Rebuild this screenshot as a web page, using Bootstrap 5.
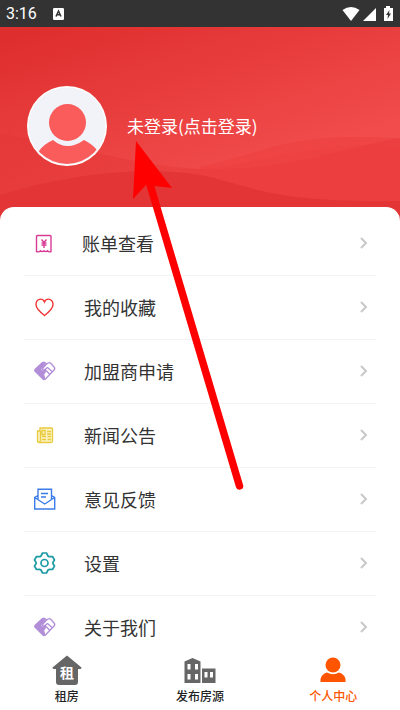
<!DOCTYPE html>
<html lang="zh-CN">
<head>
<meta charset="utf-8">
<meta name="viewport" content="width=device-width, initial-scale=1">
<title>个人中心</title>
<link href="https://cdn.jsdelivr.net/npm/bootstrap@5.3.0/dist/css/bootstrap.min.css" rel="stylesheet">
<style>
body{font-family:Roboto,"Noto Sans CJK SC",sans-serif;background:#fff;color:#333}
svg{display:block;flex:none}
.status-bar{height:27px;padding:0 6px;background:#333;color:#fff;font-size:16px;line-height:27px}
.hero{height:194px;background:#e53935;overflow:hidden}
.hero-waves{z-index:0}
.profile{height:198px;padding:0 27px;gap:20px;z-index:1}
.login-link{font-family:"Noto Sans CJK SC",sans-serif;font-size:17px;line-height:24px}
.menu-panel{margin-top:-14px;padding:5px 24px 50px;border-radius:14px 14px 0 0;z-index:1}
.menu-row{height:64px;border-bottom:1px solid #f3f3f4;padding:0 7px 2px 8px;gap:27px;color:#333;font-family:"Noto Sans CJK SC",sans-serif;font-size:18px;line-height:26px}
.menu-row:last-child{border-bottom:0}
.menu-row:first-child{gap:25px}
.tab-bar{height:62px}
.tab-link{font-family:"Noto Sans CJK SC",sans-serif;font-size:12px;line-height:16px;font-weight:500;color:#222;padding-top:7px;gap:2px}
.tab-link.active{color:#ff5500}
.pointer{left:0;top:0;z-index:1040;pointer-events:none}
</style>
<script src="https://cdn.jsdelivr.net/npm/bootstrap@5.3.0/dist/js/bootstrap.bundle.min.js"></script>
</head>
<body class="overflow-hidden">
<svg width="0" height="0" class="position-absolute" aria-hidden="true">
<symbol id="chev" viewBox="0 0 10 14"><path d="M2 2l5 5-5 5" fill="none" stroke="#c8c8c8" stroke-width="2"/></symbol>
<symbol id="hands" viewBox="0 0 24 24"><path d="M2 10L9 3.500Q10.500 2.500 12 4L13.500 5.500 8.500 10.500Q10 12.500 13 10.500L14 11.500 11 16 13 20.500Q11.500 22 10 20.500L2 12.500Q1 11.500 2 10Z" fill="#b28ed8"/><path d="M9.500 4.500Q10.500 2.500 12.500 3.500L14 5 9.500 10Q11 12 13 10L15 8.500M13.500 5.500L15.500 4Q17 3 18.500 4.500L21.500 8Q23 9.500 21.500 11L12.500 20.500M15 8.500L20 13M13 11L17.500 15.500M11 15.500L13 12.500M11 15.500L12 19" fill="none" stroke="#b28ed8" stroke-width="1.300"/></symbol>
</svg>
<header class="status-bar d-flex align-items-center justify-content-between">
<div class="d-flex align-items-center gap-3"><span>3:16</span>
<svg width="11" height="12" viewBox="0 0 11 12"><rect width="11" height="12" rx="1.300" fill="#fff"/><path d="M3 8.500L5.500 3 8 8.500M4 6.800h3" fill="none" stroke="#333" stroke-width="1.500"/></svg></div>
<svg width="52" height="16" viewBox="0 0 52 16" fill="#fff"><path d="M.5 4Q9-2 17.500 4L9 15Z"/><path d="M34 2v13H21Z"/><path d="M44 2V0h4v2h3v13h-9V2Z"/><path d="M47.500 4l-3.500 5h2l-.5 4 3.500-5.500h-2Z" fill="#333"/></svg>
</header>
<section class="hero position-relative">
<svg class="hero-waves position-absolute top-0 start-0 w-100 h-100" viewBox="0 0 400 194" preserveAspectRatio="none" aria-hidden="true">
<defs>
<linearGradient id="bg" gradientUnits="userSpaceOnUse" x1="40" y1="0" x2="120" y2="240"><stop offset="0" stop-color="#df2e2e"/><stop offset="1" stop-color="#f65353"/></linearGradient>
<linearGradient id="left" x1="0" x2="1"><stop offset="0" stop-color="#e33636"/><stop offset="1" stop-color="#ed4242"/></linearGradient></defs>
<rect width="400" height="194" fill="url(#bg)"/>
<path d="M0 107C60 114 126 138 200 142C264 137 310 112 400 120V194H0Z" fill="url(#left)" opacity=".6"/>
<path d="M200 140C285 120 285 106 400 111V194H200Z" fill="#ee4242" opacity=".7"/>
<path d="M180 142C295 145 320 125 400 111V194H180Z" fill="#eb3d3d" opacity=".8"/>
<path d="M0 168C65 148 140 138 200 148C252 158 265 176 400 174V194H0Z" fill="#e33535"/>
</svg>
<div class="profile position-relative d-flex align-items-center">
<svg width="80" height="80" viewBox="0 0 80 80" role="img" aria-label="头像"><defs><clipPath id="face"><circle cx="40" cy="40" r="38"/></clipPath></defs><circle cx="40" cy="40" r="40" fill="#fff"/><circle cx="40" cy="40" r="38.500" fill="#f1f3f8"/><g fill="#fa5b5b" clip-path="url(#face)"><circle cx="40.500" cy="36.500" r="18.500"/><path d="M0 80L12 65Q17 58 26 54Q40 66 57 54Q65 58 70 64L80 80Z"/></g></svg>
<a href="#login" class="login-link text-white text-decoration-none">未登录(点击登录)</a>
</div>
</section>
<main class="menu-panel position-relative bg-white">
<a href="#bills" class="menu-row d-flex align-items-center text-decoration-none"><svg width="25" height="24" viewBox="0 0 25 24" fill="none" stroke="#d63c94" stroke-width="1.400"><path d="M4.500 20.500V5.500q0-1 1-1h12.500q1 0 1 1v15q-2 1-3.500-.8-1.500 1.500-3.500 0-2 1.500-3.500 0-1.500 1.800-4 .8Z"/><path d="M9.500 8.500l2.500 3 2.500-3M9.500 12h5M9.500 14h5M12 11.500V17"/></svg><span class="flex-grow-1">账单查看</span><svg width="10" height="14"><use href="#chev"/></svg></a>
<a href="#favorites" class="menu-row d-flex align-items-center text-decoration-none"><svg width="25" height="24" viewBox="0 0 25 24" fill="none" stroke="#f23434" stroke-width="1.400"><path d="M12.500 20.500C8 17 4 13.500 4 9.500C4 3.500 10.500 2.500 12.500 7C14.500 2.500 21 3.500 21 9.500C21 13.500 17 17 12.500 20.500Z"/></svg><span class="flex-grow-1">我的收藏</span><svg width="10" height="14"><use href="#chev"/></svg></a>
<a href="#franchise" class="menu-row d-flex align-items-center text-decoration-none"><svg width="25" height="24"><use href="#hands"/></svg><span class="flex-grow-1">加盟商申请</span><svg width="10" height="14"><use href="#chev"/></svg></a>
<a href="#news" class="menu-row d-flex align-items-center text-decoration-none"><svg width="25" height="24" viewBox="0 0 25 24" fill="none" stroke="#e9ca3d" stroke-width="1.300"><path d="M8 5h11.500q1 0 1 1v12q0 1.500-1.500 1.500H7q-1.500 0-1.500-1.500V8H8Z" fill="#fbf3c5"/><path d="M8.500 8v9q0 2-1.500 2.500M10 7.500h3v4h-3ZM15 8.500h4M15 11h4M10 13.500h4M15.500 13.500H19M10 16.500h4M15.500 16.500H19"/></svg><span class="flex-grow-1">新闻公告</span><svg width="10" height="14"><use href="#chev"/></svg></a>
<a href="#feedback" class="menu-row d-flex align-items-center text-decoration-none"><svg width="25" height="24" viewBox="0 0 25 24" fill="none" stroke="#3b7bea" stroke-width="1.400"><path d="M6 8.500l-3.300 2V22h20V10.500l-3.200-2M2.700 10.500l10 6.500 10-6.500M6 12V2.200h13.500V12M9 6.500h7M9 10h5"/></svg><span class="flex-grow-1">意见反馈</span><svg width="10" height="14"><use href="#chev"/></svg></a>
<a href="#settings" class="menu-row d-flex align-items-center text-decoration-none"><svg width="25" height="24" viewBox="0 0 25 24" fill="none" stroke="#1b9ba6" stroke-width="1.700"><path d="M10.500 2h4l1.500 3q1 .8 2 .7l2.500-.2 2 3.500-1.500 2.300q-.5.700 0 1.400l1.500 2.300-2 3.500-2.500-.2q-1-.1-2 .7l-1.500 3h-4L9 19q-1-.8-2-.7l-2.500.2-2-3.500L4 12.700q.5-.7 0-1.400L2.500 9l2-3.500 2.500.2q1 .1 2-.7Z" stroke-linejoin="round"/><circle cx="12.500" cy="12" r="3.500"/></svg><span class="flex-grow-1">设置</span><svg width="10" height="14"><use href="#chev"/></svg></a>
<a href="#about" class="menu-row d-flex align-items-center text-decoration-none"><svg width="25" height="24"><use href="#hands"/></svg><span class="flex-grow-1">关于我们</span><svg width="10" height="14"><use href="#chev"/></svg></a>
</main>
<nav class="tab-bar fixed-bottom bg-white row g-0" aria-label="底部导航">
<a href="#rent" class="tab-link col d-flex flex-column align-items-center text-decoration-none"><svg width="30" height="31" viewBox="0 0 30 31"><path d="M15 .5L29.500 12.500Q29.500 14 28 14H26v13q0 3-3 3H7q-3 0-3-3V14H2Q.5 14 .5 12.500Z" fill="#666"/><text x="15" y="23" text-anchor="middle" font-size="14" font-weight="700" fill="#fff">租</text></svg><span>租房</span></a>
<a href="#publish" class="tab-link col d-flex flex-column align-items-center text-decoration-none"><svg width="32" height="31" viewBox="0 0 32 31"><path d="M.5 28V6.500L8.500 3 16.500 6.500V28ZM18 13.500H31.500V28H18Z" fill="#666"/><path d="M3.500 9h3v5.500h-3ZM11 9h3v5.500h-3ZM3.500 19h3v5.500h-3ZM11 19h3v5.500h-3ZM20.500 17h3v5.500h-3ZM26 17h3v5.500h-3Z" fill="#fff"/></svg><span>发布房源</span></a>
<a href="#me" class="tab-link active col d-flex flex-column align-items-center text-decoration-none" aria-current="page"><svg width="26" height="31" viewBox="0 0 26 31" fill="#ff5500"><circle cx="13" cy="10" r="7.500"/><path d="M.5 27v-3q1-5 6.500-6.500 6 3.500 12 0Q24.500 19 25.500 24v3Z"/></svg><span>个人中心</span></a>
</nav>
<svg class="pointer position-absolute" width="400" height="500" viewBox="0 0 400 500" aria-hidden="true"><path d="M149 181L239.500 486" stroke="#f00" stroke-width="7.500" stroke-linecap="round"/><path d="M136 141L172 188 146 185 133 199Z" fill="#f00"/></svg>
</body>
</html>
